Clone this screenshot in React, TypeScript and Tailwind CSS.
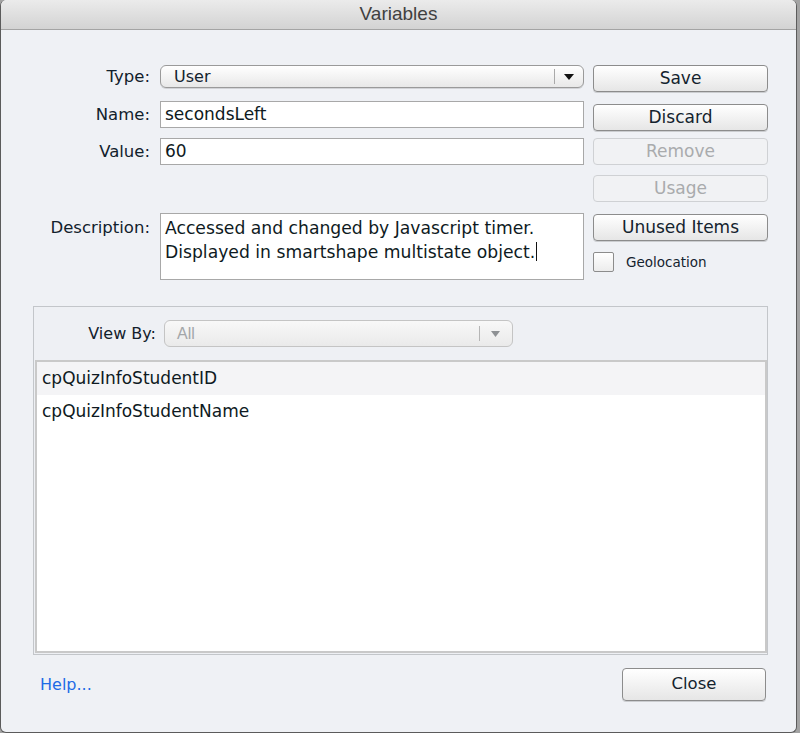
import React from 'react';

const ui = "font-['DejaVu_Sans',sans-serif]";

// plain mac-style push button
const Btn: React.FC<{ label: string; disabled?: boolean; className?: string }> = ({ label, disabled, className }) => (
  <div
    className={`flex items-center justify-center rounded-[4px] border text-[17px] ${ui} ${
      disabled
        ? 'border-[#cfd1d4] bg-[#f1f2f4] text-[#a9abad]'
        : 'border-[#8c8c8c] bg-gradient-to-b from-[#ffffff] to-[#e6e6e6] text-[#14232e] shadow-[0_1px_0_rgba(0,0,0,0.15)]'
    } ${className ?? ''}`}
  >
    {label}
  </div>
);

const Field: React.FC<{ label: string; children: React.ReactNode; className?: string }> = ({ label, children, className }) => (
  <div className={`flex items-center ${className ?? ''}`}>
    <div className="w-[117px] text-right text-[16.5px] leading-[20px] text-[#12212c]">{label}</div>
    <div className="ml-[10px] w-[424px]">{children}</div>
  </div>
);

const App: React.FC = () => {
  return (
    <div className="h-[733px] w-[800px] overflow-hidden bg-[#a3a3a3]">
      <div className={`flex h-[733px] w-[797px] flex-col overflow-hidden rounded-[6px] border-x border-b border-[#5b5b5b] bg-[#eff1f5] ${ui}`}>
        {/* Title bar */}
        <div className="flex h-[30px] shrink-0 items-center justify-center border-b border-[#a4a4a4] bg-gradient-to-b from-[#ebebeb] to-[#d3d3d3]">
          <span className="font-['Liberation_Sans',sans-serif] text-[19px] text-[#404040]">Variables</span>
        </div>

        {/* Top form */}
        <div className="mt-[35px] flex pl-[32px]">
          <div className="flex flex-col">
            <Field label="Type:">
              <div className="flex h-[23px] items-center rounded-[6px] border border-[#9a9a9a] bg-gradient-to-b from-[#ffffff] to-[#e8e8e8] pl-[13px] shadow-[0_1px_0_rgba(0,0,0,0.12)]">
                <span className="flex-1 text-[16px] leading-[20px] text-[#14232e]">User</span>
                <div className="h-[15px] w-px bg-[#a9a9a9]" />
                <svg width="28" height="10" viewBox="0 0 28 10">
                  <path d="M9 2 L19 2 L14 8 Z" fill="#111" />
                </svg>
              </div>
            </Field>
            <Field label="Name:" className="mt-[13px]">
              <div className="flex h-[27px] items-center border border-[#a8a8a8] bg-white pl-[4px] text-[17px] text-[#0e1a22]">
                secondsLeft
              </div>
            </Field>
            <Field label="Value:" className="mt-[10px]">
              <div className="flex h-[27px] items-center border border-[#a8a8a8] bg-white pl-[4px] text-[17px] text-[#0e1a22]">
                60
              </div>
            </Field>
            <div className="mt-[48px] flex items-start">
              <div className="mt-[5px] w-[117px] text-right text-[16.5px] leading-[20px] text-[#12212c]">Description:</div>
              <div className="ml-[10px] h-[67px] w-[424px] border border-[#a8a8a8] bg-white px-[4px] pt-[4px] text-[17.2px] leading-[21px] text-[#0e1a22]">
                Accessed and changed by Javascript timer.
                <br />
                Displayed in smartshape multistate object.
                <span className="ml-px inline-block h-[19px] w-px translate-y-[3px] bg-[#111]" />
              </div>
            </div>
          </div>

          <div className="ml-[9px] flex w-[175px] flex-col">
            <Btn label="Save" className="h-[27px]" />
            <Btn label="Discard" className="mt-[12px] h-[27px]" />
            <Btn label="Remove" disabled className="mt-[7px] h-[27px]" />
            <Btn label="Usage" disabled className="mt-[10px] h-[27px]" />
            <Btn label="Unused Items" className="mt-[12px] h-[27px]" />
            <div className="mt-[11px] flex items-center">
              <div className="h-[20px] w-[21px] rounded-[2px] border border-[#8c8c8c] bg-gradient-to-b from-[#ffffff] to-[#ececec]" />
              <span className="ml-[12px] text-[13.5px] text-[#14232e]">Geolocation</span>
            </div>
          </div>
        </div>

        {/* View by group */}
        <div className="ml-[32px] mt-[26px] flex h-[349px] w-[735px] flex-col border border-[#c3c6ca] bg-[#eef0f4]">
          <div className="mt-[13px] flex items-center">
            <div className="w-[122px] text-right text-[16px] text-[#12212c]">View By:</div>
            <div className="ml-[8px] flex h-[27px] w-[349px] items-center rounded-[6px] border border-[#c4c4c4] bg-gradient-to-b from-[#f8f8f8] to-[#eaeaea] pl-[12px]">
              <span className="flex-1 font-['Liberation_Sans',sans-serif] text-[16px] text-[#a3a6a9]">All</span>
              <div className="h-[15px] w-px bg-[#b5b5b5]" />
              <svg width="32" height="10" viewBox="0 0 32 10">
                <path d="M11 2 L20 2 L15.5 8 Z" fill="#8e9194" />
              </svg>
            </div>
          </div>
          <div className="mb-px ml-px mt-[13px] flex-1 border-2 border-[#c9c9c9] bg-white">
            <div className="flex h-[33px] items-center bg-[#f4f4f6] pl-[5px] text-[17px] text-[#0e1a22]">cpQuizInfoStudentID</div>
            <div className="flex h-[33px] items-center pl-[5px] text-[17px] text-[#0e1a22]">cpQuizInfoStudentName</div>
          </div>
        </div>

        {/* Footer */}
        <div className="mt-[13px] flex items-center justify-between pl-[39px] pr-[30px]">
          <span className="text-[16px] text-[#1e6be6]">Help...</span>
          <Btn label="Close" className="h-[33px] w-[144px] !text-[16.5px]" />
        </div>
      </div>
    </div>
  );
};

export default App;
